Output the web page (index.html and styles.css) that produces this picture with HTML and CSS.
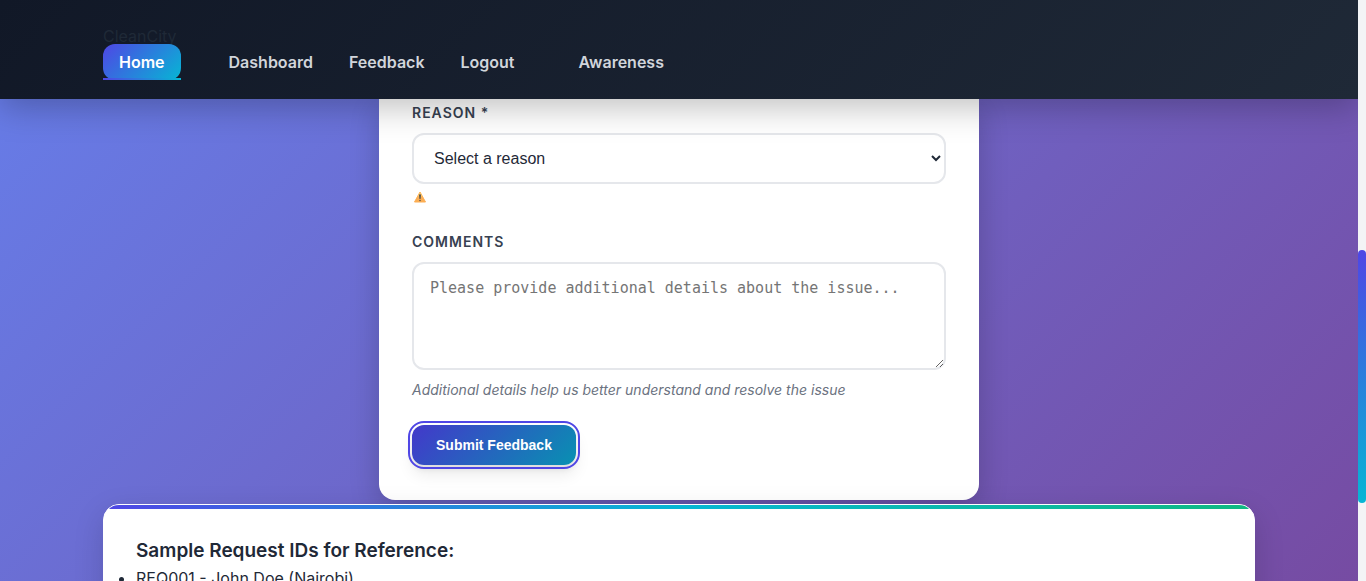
FILE: index.html
```html
<!DOCTYPE html>
<html lang="en">
<head>
<meta charset="utf-8">
<meta name="viewport" content="width=device-width, initial-scale=1">
<title>CleanCity - Feedback</title>
<link rel="stylesheet" href="styles.css">
</head>
<body>
<div class="page">
  <header class="site-header">
    <div class="container">
      <div class="brand">CleanCity</div>
      <nav class="nav" aria-label="Main">
        <a class="nav-link active" href="#home">Home</a>
        <div class="nav-group">
          <a class="nav-link" href="#dashboard">Dashboard</a>
          <a class="nav-link" href="#feedback">Feedback</a>
          <a class="nav-link" href="#logout">Logout</a>
        </div>
        <a class="nav-link" href="#awareness">Awareness</a>
      </nav>
    </div>
  </header>
  <main class="content">
    <form class="form-card">
      <div class="field">
        <label class="field-label" for="reason">Reason *</label>
        <select class="control select" id="reason">
          <option>Select a reason</option>
        </select>
        <div class="field-error">
          <svg class="warning" viewBox="0 0 24 24" role="img" aria-label="Warning">
            <path d="M12 2 L23 22 H1 Z" fill="#fcae54" stroke="#fcae54" stroke-width="2" stroke-linejoin="round"/>
            <path d="M12 2 L17 11 H7 Z" fill="#ffc96b"/>
            <path d="M10 7 H14 L13 16 H11 Z" fill="#4b4a48"/>
            <circle cx="12" cy="19" r="1.5" fill="#4b4a48"/>
          </svg>
        </div>
      </div>
      <div class="field">
        <label class="field-label" for="comments">Comments</label>
        <textarea class="control textarea" id="comments" placeholder="Please provide additional details about the issue..."></textarea>
        <p class="hint">Additional details help us better understand and resolve the issue</p>
      </div>
      <button class="submit" type="button">Submit Feedback</button>
    </form>
    <section class="container samples">
      <h2 class="samples-title">Sample Request IDs for Reference:</h2>
      <ul class="samples-list">
        <li>REQ001 - John Doe (Nairobi)</li>
      </ul>
    </section>
  </main>
  <div class="scroll-track"><div class="scroll-thumb"></div></div>
</div>
</body>
</html>
```

FILE: styles.css
```css
* {
  box-sizing: border-box;
}

body {
  margin: 0;
  font-family: Inter, "Liberation Sans", sans-serif;
  font-size: 16px;
  color: #1f2937;
}

.page {
  display: grid;
  grid-template-columns: minmax(0, 1fr) 8px;
  grid-template-rows: auto minmax(0, 1fr);
  height: 100vh;
  overflow: hidden;
  background: linear-gradient(135deg, #667eea 0%, #764ba2 100%);
}

.container {
  width: calc(100% - 32px);
  max-width: 1152px;
  margin: 0 auto;
}

.site-header {
  z-index: 1;
  padding: 24px 0 19px;
  background: linear-gradient(135deg, #111827 0%, #1f2937 100%);
  box-shadow: 0 8px 32px rgba(0, 0, 0, 0.25);
}

.brand {
  height: 20px;
  line-height: 24px;
}

.nav,
.nav-group {
  position: relative;
  display: flex;
}

.nav {
  gap: 32px;
}

.nav-group {
  gap: 4px;
}

.nav-link {
  padding: 8px 16px;
  line-height: 20px;
  font-weight: 600;
  color: #d1d5db;
  text-decoration: none;
  border-radius: 12px;
}

.nav-link.active {
  position: relative;
  color: #fff;
  background: linear-gradient(135deg, #4f46e5, #06b6d4);
}

.nav-link.active::after {
  content: "";
  position: absolute;
  left: 0;
  right: 0;
  bottom: 0;
  height: 2px;
  background: linear-gradient(90deg, #4f46e5, #06b6d4);
}

.content {
  grid-column: 1;
  display: flex;
  flex-direction: column;
  gap: 4px;
  overflow: hidden;
}

.form-card {
  width: 100%;
  max-width: 600px;
  flex: none;
  margin: 0 auto;
  padding: 4px 33px 35px;
  background: #fff;
  border-radius: 0 0 16px 16px;
  box-shadow: 0 10px 30px rgba(0, 0, 0, 0.2);
}

.field {
  display: flex;
  flex-direction: column;
  margin-bottom: 25px;
}

.field-label {
  margin-bottom: 10px;
  font-size: 14px;
  line-height: 20px;
  font-weight: 600;
  letter-spacing: 1px;
  text-transform: uppercase;
  color: #374151;
}

.control {
  width: 100%;
  border: 2px solid #e5e7eb;
  border-radius: 12px;
  background: #fff;
}

.select {
  height: 51px;
  padding: 0 0 0 16px;
  font: 16px "Liberation Sans", sans-serif;
  color: #1f2937;
}

.field-error {
  display: flex;
  padding: 7px 2px 4px;
}

.warning {
  width: 12px;
  height: 12px;
}

.textarea {
  height: 108px;
  padding: 15px 16px;
  font: 15px/18px "DejaVu Sans Mono", monospace;
  resize: vertical;
}

.textarea::placeholder {
  color: #757575;
}

.hint {
  margin: 10px 0 0;
  font-size: 14px;
  line-height: 20px;
  font-style: italic;
  color: #6b7280;
}

.submit {
  display: block;
  height: 40px;
  padding: 0 24px;
  border: 0;
  border-radius: 12px;
  font: bold 14px "Liberation Sans", sans-serif;
  color: #fff;
  background: linear-gradient(135deg, #4338ca, #0891b2);
  outline: 2px solid #4f46e5;
  outline-offset: 2px;
  box-shadow: 0 10px 16px rgba(0, 0, 0, 0.08), 0 4px 6px rgba(0, 0, 0, 0.08);
}

.samples {
  position: relative;
  flex: none;
  padding: 36px 32px 32px;
  border: 1px solid #fff;
  border-radius: 16px;
  overflow: hidden;
  background: #fff;
  box-shadow: 0 10px 30px rgba(0, 0, 0, 0.15);
}

.samples::before {
  content: "";
  position: absolute;
  inset: 0 0 auto;
  height: 4px;
  background: linear-gradient(90deg, #4f46e5, #06b6d4, #10b981);
}

.samples-title {
  margin: 0;
  font-size: 19px;
  line-height: 20px;
  font-weight: 600;
}

.samples-list {
  margin: 0;
  padding: 5px 0 0;
  line-height: 24px;
}

.scroll-track {
  grid-column: 2;
  grid-row: 1 / 3;
  z-index: 2;
  display: grid;
  grid-template-rows: 250fr 253fr 78fr;
  background: #f3f4f6;
}

.scroll-thumb {
  grid-row: 2;
  border-radius: 4px;
  background: linear-gradient(180deg, #4f46e5, #06b6d4);
}
```
